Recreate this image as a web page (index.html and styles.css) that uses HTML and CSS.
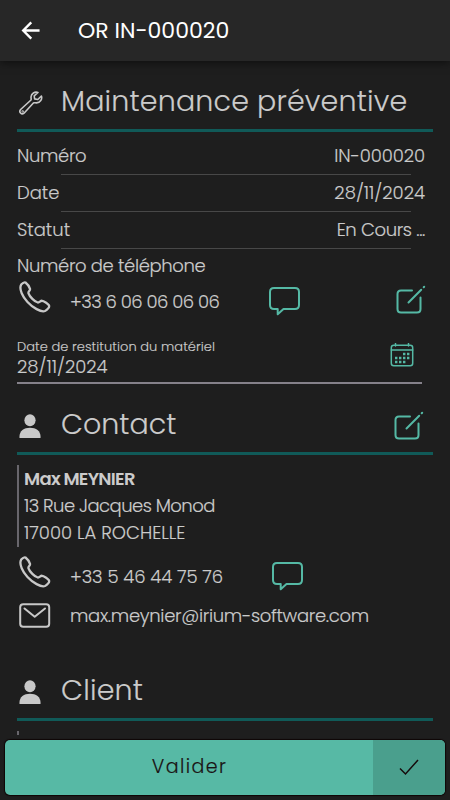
FILE: index.html
```
<!DOCTYPE html>
<html lang="fr">
<head>
    <meta charset="UTF-8">
    <meta name="viewport" content="width=device-width, initial-scale=1.0">
    <title>OR IN-000020</title>
    <link rel="stylesheet" href="styles.css">
</head>
<body>
    <!-- Shared icons -->
    <svg class="sprite" width="0" height="0">
        <symbol id="phone" viewBox="0 0 32 32">
            <path d="M2.2 3.6 C3.8 1.8 5.4 .9 6.5 1.5 C7.8 2.5 10.4 6 11 7.9 C11.5 9.8 8.8 10.4 9.5 12.3 C10.5 15.5 15.7 20.8 18.8 21.5 C20.7 21.8 21.4 19.3 23.3 19.8 C25.4 20.3 29.2 22.9 30 24.4 C30.8 26 28.3 29 26 30 C22 31.5 13.5 26.5 8.5 21 C4 16.2 -.4 8.2 2.2 3.6 Z"/>
        </symbol>
        <symbol id="bubble" viewBox="0 0 32 30">
            <path d="M5 2 H26 Q30 2 30 6 V19 Q30 23 26 23 H14.5 L8.7 28.3 V23 H5 Q1 23 1 19 V6 Q1 2 5 2 Z"/>
        </symbol>
        <symbol id="edit" viewBox="0 0 30 30">
            <path d="M16 5.5 H5 Q1.5 5.5 1.5 9 V24 Q1.5 27.5 5 27.5 H21 Q24.5 27.5 24.5 24 V12.5"/>
            <path d="M12.5 17.5 L25.2 4.8 M27.7 2.3 L28.2 1.8"/>
        </symbol>
        <symbol id="person" viewBox="0 0 22 24">
            <ellipse cx="11" cy="6.3" rx="5.6" ry="6"/>
            <path d="M.5 24 C-.2 17.5 4.5 13.8 11 13.8 C17.5 13.8 22.2 17.5 21.5 24 Z"/>
        </symbol>
    </svg>

    <header class="topbar">
        <svg class="back" viewBox="0 0 20 20"><path d="M19 10 H2 M10.3 1.5 L1.8 10 L10.3 18.5"/></svg>
        <h1>OR IN-000020</h1>
    </header>

    <main>
        <section class="maintenance">
            <div class="section-title">
                <svg class="wrench" viewBox="0 0 24 24">
                    <path d="M19 1.5 C15.8 .3 12.2 2.4 12 6 C12 7.2 12.4 8.2 12 9 L1.6 18.5 C-.6 21 2.5 24.3 5 22.2 L14.4 12 C15.2 11.4 16.2 12 17.5 11.9 C21.3 11.7 23.5 8.2 22.4 5 L18.8 8.5 L15.6 7.9 L15.2 4.9 Z"/>
                    <circle cx="3.7" cy="20.4" r=".4"/>
                </svg>
                <h2 class="t-maintenance">Maintenance préventive</h2>
            </div>

            <div class="row"><span class="t-numero">Numéro</span><span class="t-phone">IN-000020</span></div>
            <div class="row"><span>Date</span><span>28/11/2024</span></div>
            <div class="row"><span>Statut</span><span class="t-numero">En Cours ...</span></div>

            <div class="phone-label"><span class="t-numero">Numéro de téléphone</span></div>
            <div class="contact-line">
                <svg class="icon-phone"><use href="#phone"/></svg>
                <span class="value t-tight">+33 6 06 06 06 06</span>
                <svg class="icon-bubble"><use href="#bubble"/></svg>
                <svg class="icon-edit"><use href="#edit"/></svg>
            </div>

            <div class="date-field">
                <div class="date-text">
                    <label>Date de restitution du matériel</label>
                    <span>28/11/2024</span>
                </div>
                <svg class="calendar" viewBox="0 0 24 24">
                    <rect x="1.3" y="2.3" width="21.4" height="20.4" rx="2.5"/>
                    <path d="M1.3 7 H22.7 M5.5 .5 V3 M18.5 .5 V3"/>
                    <path class="dots" d="M13 11 h2.4 M17 11 h2.4 M5 15 h2.4 M9 15 h2.4 M13 15 h2.4 M17 15 h2.4 M5 19 h2.4 M9 19 h2.4 M13 19 h2.4"/>
                </svg>
            </div>
        </section>

        <section class="contact">
            <div class="section-title">
                <svg class="person"><use href="#person"/></svg>
                <h2>Contact</h2>
                <svg class="icon-edit"><use href="#edit"/></svg>
            </div>
            <div class="address">
                <strong>Max MEYNIER</strong>
                <span class="t-tight">13 Rue Jacques Monod</span>
                <span>17000 LA ROCHELLE</span>
            </div>
            <div class="contact-line">
                <svg class="icon-phone"><use href="#phone"/></svg>
                <span class="value t-phone">+33 5 46 44 75 76</span>
                <svg class="icon-bubble"><use href="#bubble"/></svg>
            </div>
            <div class="mail-line">
                <svg class="icon-mail" viewBox="0 0 32 25">
                    <rect x="1.2" y="1.2" width="29" height="22.6" rx="3"/>
                    <path d="M5.5 5.5 L15.7 13.8 L26 5.5"/>
                </svg>
                <span class="value t-mail">max.meynier@irium-software.com</span>
            </div>
        </section>

        <section class="client">
            <div class="section-title">
                <svg class="person"><use href="#person"/></svg>
                <h2 class="t-client">Client</h2>
            </div>
            <div class="address"></div>
        </section>
    </main>

    <footer>
        <button class="validate">
            <span class="validate-label">Valider</span>
            <span class="validate-icon"><svg viewBox="0 0 20 17"><path d="M1 9.5 L6.5 15 L19 1"/></svg></span>
        </button>
    </footer>
</body>
</html>
```
FILE: styles.css
```
* {
    box-sizing: border-box;
}

body {
    margin: 0;
    height: 800px;
    display: flex;
    flex-direction: column;
    overflow: hidden;
    background: #1e1e1e;
    color: #cbcbcb;
    font-family: Poppins, Inter, sans-serif;
    font-size: 18px;
    font-weight: 300;
    white-space: nowrap;
    -webkit-text-stroke: 0.15px currentColor;
}

h1, h2 {
    margin: 0;
    font-weight: 300;
}

svg {
    display: block;
    flex: none;
    fill: none;
    stroke: #c8c8c8;
    stroke-width: 2;
    stroke-linecap: round;
    stroke-linejoin: round;
}

.sprite {
    position: absolute;
}

/* Top bar */
.topbar {
    flex: none;
    height: 61px;
    display: flex;
    align-items: center;
    padding-left: 21px;
    background: #272727;
    box-shadow: 0 2px 8px rgba(0, 0, 0, 0.5);
    color: #fff;
}

.topbar h1 {
    margin-left: 37px;
    font-size: 22px;
    font-weight: 400;
    -webkit-text-stroke: 0;
}

.back {
    width: 20px;
    height: 19px;
    stroke: #fff;
    stroke-width: 2.5;
    stroke-linecap: butt;
    stroke-linejoin: miter;
}

/* Content */
main {
    flex: 1;
    min-height: 0;
    overflow: hidden;
    padding: 0 17px;
}

.section-title {
    display: flex;
    align-items: center;
    border-bottom: 3px solid #105a58;
}

.section-title h2 {
    font-size: 28.5px;
    line-height: 40px;
}

.t-maintenance {
    letter-spacing: 0.17px;
}

.t-client {
    letter-spacing: 0.2px;
}

.t-numero {
    letter-spacing: -0.36px;
}

.t-tight {
    letter-spacing: -0.54px;
}

.t-phone {
    letter-spacing: -0.1px;
}

.t-mail {
    letter-spacing: -0.32px;
}

.maintenance .section-title {
    height: 71px;
    padding-top: 12px;
    margin-bottom: 6px;
}

.wrench {
    width: 24px;
    height: 24px;
    margin: 4px 18px 0 2px;
    stroke-width: 1.6;
}

.row {
    height: 37px;
    display: flex;
    justify-content: space-between;
    align-items: center;
    padding: 0 8px 2px 0;
    background: linear-gradient(#484848, #484848) 44px 36px / 350px 1px no-repeat;
}

.phone-label {
    height: 32px;
    line-height: 34px;
}

.contact-line {
    height: 32px;
    display: flex;
    padding-left: 2px;
}

.icon-phone {
    width: 32px;
    height: 32px;
    stroke-width: 2.3;
}

.value {
    width: 199px;
    margin-left: 19px;
    line-height: 42px;
}

.icon-bubble {
    width: 32px;
    height: 30px;
    margin-top: 5px;
    stroke: #55b9a5;
}

.icon-edit {
    width: 30px;
    height: 30px;
    margin: 4px 7px 0 auto;
    stroke: #55b9a5;
}

.date-field {
    width: 405px;
    height: 71px;
    display: flex;
    justify-content: space-between;
    padding: 25px 7px 0 0;
    border-bottom: 2px solid #85818a;
}

.date-text {
    display: flex;
    flex-direction: column;
}

.date-text label {
    font-size: 13px;
    line-height: 17px;
    letter-spacing: 0.05px;
}

.date-text span {
    line-height: 23px;
}

.calendar {
    width: 24px;
    height: 24px;
    margin: 5px 1px 0 0;
    stroke: #55b9a5;
    stroke-width: 1.5;
}

.calendar .dots {
    stroke-width: 2.4;
    stroke-linecap: butt;
}

/* Contact and client */
.person {
    width: 22px;
    height: 24px;
    margin: 4px 20px 0 2px;
    fill: #c8c8c8;
    stroke: none;
}

.contact .section-title {
    height: 71px;
    padding-top: 12px;
    margin-bottom: 10px;
}

.contact .icon-edit {
    margin: 4px 9px 0 auto;
}

.address {
    height: 82px;
    display: flex;
    flex-direction: column;
    padding-left: 5px;
    border-left: 2px solid #68666c;
    line-height: 27px;
}

.address strong {
    font-weight: 600;
    letter-spacing: -0.75px;
    -webkit-text-stroke: 0;
}

.contact .contact-line {
    margin-top: 9px;
}

.contact .contact-line .value {
    width: 202px;
}

.mail-line {
    display: flex;
    align-items: center;
    height: 25px;
    margin-top: 15px;
    padding-left: 2px;
}

.mail-line .value {
    line-height: 25px;
}

.icon-mail {
    width: 32px;
    height: 25px;
}

.client .section-title {
    height: 67px;
    padding-top: 7px;
    margin: 26px 0 10px;
}

.client .address {
    height: 4px;
}

/* Validate button */
footer {
    flex: none;
    padding: 5px;
}

.validate {
    width: 440px;
    height: 55px;
    display: flex;
    padding: 0;
    border: 0;
    border-radius: 5px;
    overflow: hidden;
    background: #57b9a5;
    box-shadow: 0 0 1px 1px #0e0505;
    color: #1a1213;
    font: inherit;
}

.validate-label {
    flex: 1;
    display: flex;
    align-items: center;
    justify-content: center;
    height: 100%;
    padding: 0 0 2px 1px;
    font-size: 19px;
    letter-spacing: 1.4px;
}

.validate-icon {
    width: 72px;
    height: 100%;
    display: flex;
    align-items: center;
    justify-content: center;
    background: #4a9f8d;
}

.validate-icon svg {
    width: 20px;
    height: 17px;
    stroke: #160b0c;
    stroke-width: 1.5;
    stroke-linecap: butt;
    stroke-linejoin: miter;
}
```
